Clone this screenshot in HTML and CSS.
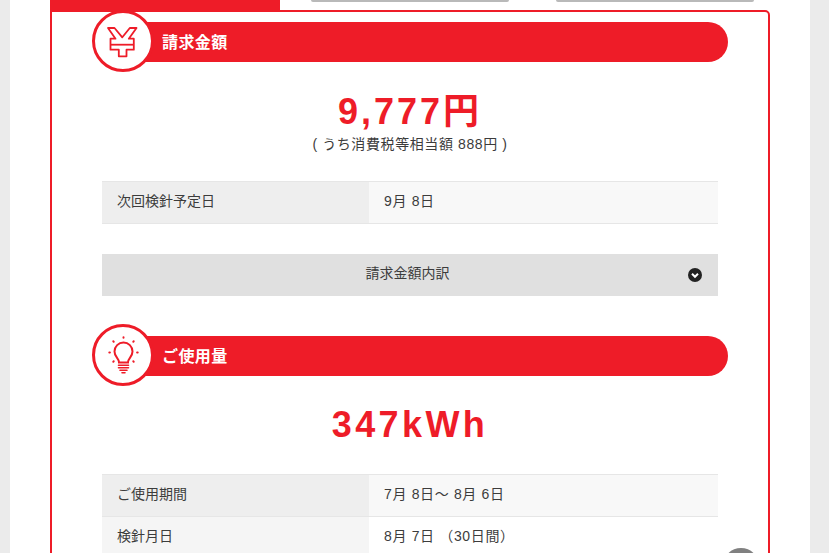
FILE: index.html
```html
<!DOCTYPE html>
<html lang="ja">
<head>
    <meta charset="UTF-8">
    <meta name="viewport" content="width=device-width, initial-scale=1.0">
    <title>ご請求内容</title>
    <link rel="stylesheet" href="styles.css">
</head>
<body>
    <div class="container">
        <div class="tabs">
            <div class="tab tab-active"></div>
            <div class="tab tab-first"></div>
            <div class="tab tab-second"></div>
        </div>
        <div class="panel">
            <div class="section-head">
                <div class="head-icon">
                    <svg width="34" height="34" viewBox="0 0 34 34">
                        <g fill="#fff" stroke="#ee1c28" stroke-width="1.800" stroke-linejoin="round">
                            <path d="M2 4h6.500L16.300 13.300 23.800 4h6.700L22.800 14.700h5v11h-7.300v6.600h-7.700v-6.600H4.500v-11h5z"/>
                            <path d="M4.500 20.700h23.300" fill="none"/>
                        </g>
                    </svg>
                </div>
                <div class="head-bar">請求金額</div>
            </div>
            <div class="amount amount-bill">9,777円</div>
            <div class="amount-note">( うち消費税等相当額 888円 )</div>
            <table class="info">
                <tr>
                    <th>次回検針予定日</th>
                    <td>9月 8日</td>
                </tr>
            </table>
            <div class="detail-button">
                請求金額内訳
                <svg class="chevron" width="14" height="14" viewBox="0 0 14 14">
                    <circle cx="7" cy="7" r="7" fill="#222"/>
                    <path d="M4 5.800l3 3 3-3" fill="none" stroke="#fff" stroke-width="2"/>
                </svg>
            </div>
            <div class="section-head section-usage">
                <div class="head-icon">
                    <svg width="34" height="38" viewBox="0 0 34 38">
                        <g fill="none" stroke="#ee1c28" stroke-linecap="round">
                            <path d="M13 26.500c0-4.500-4.500-5.500-4.500-11a9 9 0 0 1 18 0c0 5.500-4.500 6.500-4.500 11z" stroke-width="2"/>
                            <path d="M12.500 29.300h10M12.500 31.800h10M14 34.300h7M16 36.800h3" stroke-width="1.600"/>
                            <path d="M17.500 1.200v.6M7.300 5.300l.4.4M27.700 5.300l-.4.4M3.300 16.500h.6M31.100 16.500h.6M7.300 25.700l.4-.4M27.700 25.700l-.4-.4" stroke-width="2"/>
                        </g>
                    </svg>
                </div>
                <div class="head-bar">ご使用量</div>
            </div>
            <div class="amount amount-usage">347kWh</div>
            <table class="info">
                <tr>
                    <th>ご使用期間</th>
                    <td>7月 8日～ 8月 6日</td>
                </tr>
                <tr>
                    <th>検針月日</th>
                    <td>8月 7日 （30日間）</td>
                </tr>
            </table>
        </div>
        <div class="page-top"></div>
    </div>
</body>
</html>
```
FILE: styles.css
```css
html, body {
    height: 553px;
    overflow: hidden;
}
body {
    font-family: "Liberation Sans", "Noto Sans CJK JP", sans-serif;
    background-color: #ebebeb;
    color: #3c3c3c;
    margin: 0;
    font-size: 14px;
}
.container {
    position: relative;
    width: 800px;
    height: 553px;
    margin-left: 10px;
    padding: 0 40px;
    box-sizing: border-box;
    background-color: #fff;
    overflow: hidden;
}
.tabs {
    display: flex;
    align-items: flex-start;
    height: 10px;
}
.tab {
    height: 2px;
    background-color: #b9b9b9;
    border-radius: 0 0 5px 5px;
}
.tab-active {
    width: 230px;
    height: 10px;
    background-color: #ee1c28;
    border-radius: 0;
}
.tab-first {
    width: 198px;
    margin-left: 31px;
}
.tab-second {
    width: 198px;
    margin-left: 47px;
}
.panel {
    height: 600px;
    padding: 0 40px;
    border: 2px solid #ee1c28;
    border-radius: 0 5px 0 0;
}
.section-head {
    position: relative;
    height: 62px;
    margin-top: -2px;
    padding-top: 12px;
    box-sizing: border-box;
}
.section-usage {
    margin-top: 28px;
}
.head-icon {
    position: absolute;
    left: 0;
    top: 0;
    width: 62px;
    height: 62px;
    box-sizing: border-box;
    border: 3.5px solid #ee1c28;
    border-radius: 50%;
    background-color: #fff;
    display: flex;
    align-items: center;
    justify-content: center;
}
.head-bar {
    height: 40px;
    margin-left: 30px;
    line-height: 41px;
    padding-left: 40px;
    background-color: #ee1c28;
    border-radius: 0 20px 20px 0;
    color: #fff;
    font-size: 16px;
    font-weight: bold;
    letter-spacing: 0.4px;
}
.amount {
    text-align: center;
    color: #ee1c28;
    font-size: 36px;
    font-weight: bold;
    line-height: 42px;
}
.amount-bill {
    margin-top: 19px;
    letter-spacing: 3px;
}
.amount-note {
    margin-top: 1px;
    text-align: center;
    line-height: 20px;
    letter-spacing: 0.6px;
}
.amount-usage {
    margin-top: 18px;
    letter-spacing: 3.4px;
}
.info {
    width: 616px;
    margin: 27px 0 0 10px;
    border-collapse: collapse;
    table-layout: fixed;
}
.amount-usage + .info {
    margin-top: 28px;
}
.info th, .info td {
    height: 42px;
    padding: 0 15px 5px;
    box-sizing: border-box;
    border-top: 1px solid #e6e6e6;
    border-bottom: 1px solid #e6e6e6;
    font-weight: normal;
    text-align: left;
}
.info th {
    width: 267px;
    background-color: #eee;
}
.info td {
    background-color: #f8f8f8;
    letter-spacing: 0.65px;
}
.info tr:nth-child(even) th {
    background-color: #f5f5f5;
}
.info tr:nth-child(even) td {
    background-color: #fff;
}
.detail-button {
    position: relative;
    width: 616px;
    height: 42px;
    margin: 30px 0 0 10px;
    padding-right: 5px;
    box-sizing: border-box;
    background-color: #e0e0e0;
    text-align: center;
    line-height: 38px;
}
.chevron {
    position: absolute;
    right: 16px;
    top: 14px;
}
.page-top {
    position: absolute;
    left: 713px;
    top: 548px;
    width: 36px;
    height: 36px;
    border-radius: 50%;
    background-color: #808080;
}
```
